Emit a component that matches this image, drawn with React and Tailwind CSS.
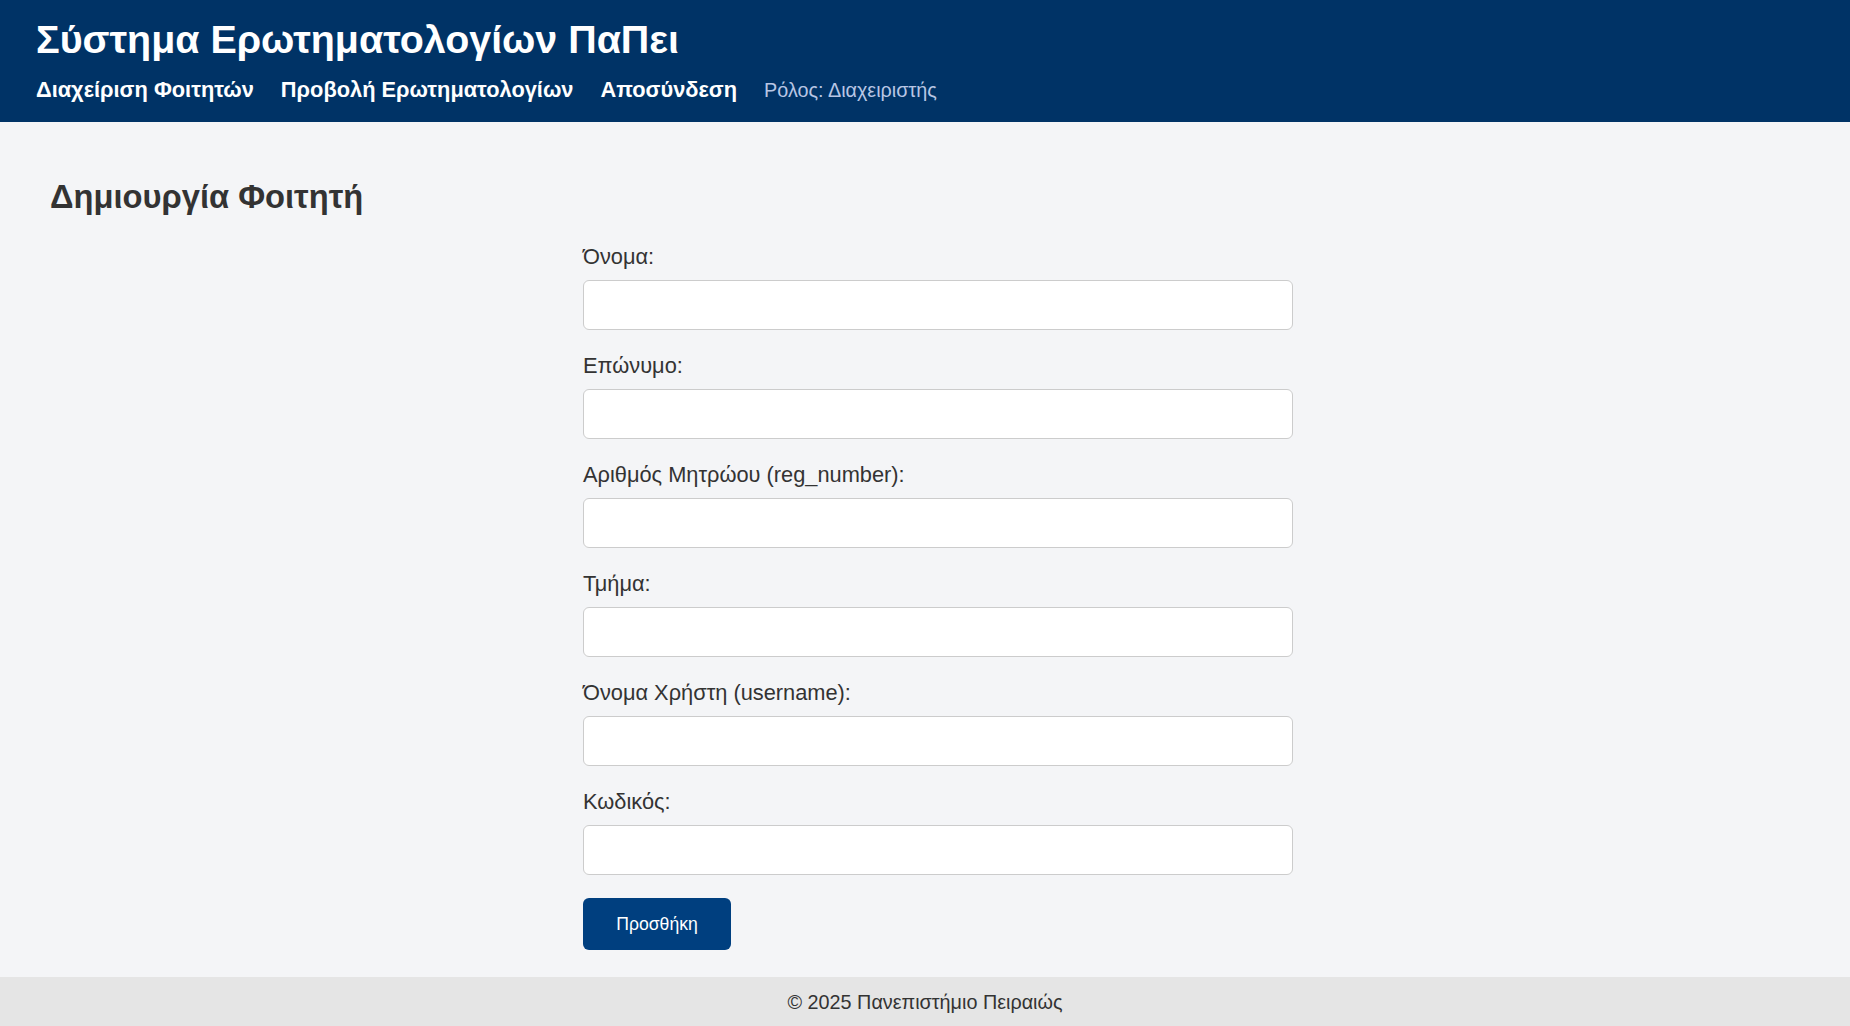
import React from 'react';

const fields = [
  { label: 'Όνομα:', type: 'text' },
  { label: 'Επώνυμο:', type: 'text' },
  { label: 'Αριθμός Μητρώου (reg_number):', type: 'text' },
  { label: 'Τμήμα:', type: 'text' },
  { label: 'Όνομα Χρήστη (username):', type: 'text' },
  { label: 'Κωδικός:', type: 'password' },
];

export default function App() {
  return (
    <div className="min-h-screen flex flex-col bg-[#f4f5f7] text-[#333] font-['Liberation_Sans',Arial,sans-serif]">
      <header className="bg-[#003366] px-[36px] pt-[17px] pb-[21px]">
        <h1 className="text-white font-bold text-[39.4px] leading-[44px]">Σύστημα Ερωτηματολογίων ΠαΠει</h1>
        <nav className="mt-[18px] flex items-baseline gap-[27px] leading-[22px]">
          <a href="#" className="text-white font-bold text-[21.8px]">Διαχείριση Φοιτητών</a>
          <a href="#" className="text-white font-bold text-[21.8px]">Προβολή Ερωτηματολογίων</a>
          <a href="#" className="text-white font-bold text-[21.8px]">Αποσύνδεση</a>
          <span className="text-[#b8c6e4] text-[19.8px]">Ρόλος: Διαχειριστής</span>
        </nav>
      </header>

      <main className="flex-1 pl-[50px] pr-[49px] pt-[55px] pb-[27px]">
        <h2 className="font-bold text-[32.7px] leading-[39px]">Δημιουργία Φοιτητή</h2>
        <form className="ml-[533px] w-[710px] mt-[28px]" onSubmit={(e) => e.preventDefault()}>
          {fields.map((f, i) => (
            <div key={i} className={i === fields.length - 1 ? 'mb-[23px]' : 'mb-[23px]'}>
              <label className="block text-[21.8px] leading-[25px] mb-[11px]">{f.label}</label>
              <input
                type={f.type}
                className="block w-full h-[50px] bg-white border border-[#cccccc] rounded-[6px] px-[12px] text-[19.2px] outline-none"
              />
            </div>
          ))}
          <button
            type="submit"
            className="w-[148px] h-[52px] bg-[#003f7f] text-white text-[17.6px] rounded-[6px]"
          >
            Προσθήκη
          </button>
        </form>
      </main>

      <footer className="bg-[#e5e5e5] h-[50px] pt-[2px] flex items-center justify-center text-[19.8px] text-[#333]">
        © 2025 Πανεπιστήμιο Πειραιώς
      </footer>
    </div>
  );
}
